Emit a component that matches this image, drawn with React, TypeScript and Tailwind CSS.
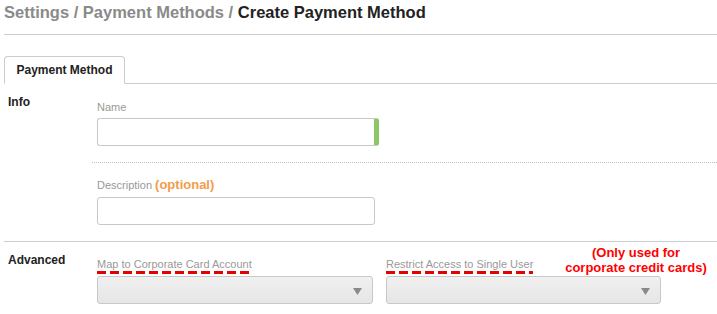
import React from "react";

const dash =
  "h-[3px] w-full bg-[repeating-linear-gradient(90deg,#e60000_0px,#e60000_9px,transparent_9px,transparent_13px)]";

const Arrow = () => (
  <svg width="9" height="7" viewBox="0 0 9 7" className="absolute right-[10px] top-[11px]">
    <path d="M0 0 H9 L4.5 7 Z" fill="#8a8a8a" />
  </svg>
);

const Select = ({ width }: { width: string }) => (
  <div
    className={`relative h-[28px] ${width} rounded-[3px] border border-[#c8c8c8] bg-gradient-to-b from-[#f0f0f0] to-[#e6e6e6]`}
  >
    <Arrow />
  </div>
);

export default function App() {
  return (
    <div className="min-h-screen bg-white pl-1 font-['Liberation_Sans',Arial,sans-serif]">
      <h1 className="h-[35px] border-b border-[#cccccc] text-[16.5px] font-bold leading-[24px]">
        <span className="text-[#8a8a8a]">Settings / Payment Methods / </span>
        <span className="text-[#222]">Create Payment Method</span>
      </h1>

      {/* tabs */}
      <div className="mt-[21px] flex h-[28px] border-b border-[#cccccc]">
        <div className="-mb-px h-[28px] w-[121px] rounded-t-[4px] border border-[#cccccc] border-b-white bg-white text-center text-[12px] font-bold leading-[26px] text-[#222]">
          Payment Method
        </div>
      </div>

      {/* Info */}
      <div className="flex border-b border-[#cccccc]">
        <div className="w-[88px] pl-1 pt-[10px] text-[12px] font-bold leading-[16px] text-[#222]">
          Info
        </div>
        <div className="flex-1">
          <div className="border-b border-dotted border-[#c4c4c4] pb-[16px] pl-[5px] pt-[16px]">
            <div className="mb-[4px] text-[11px] leading-[14px] text-[#999]">Name</div>
            <div className="h-[28px] w-[282px] rounded-[3px] border border-r-[5px] border-[#c8c8c8] border-r-[#8cc665] bg-white" />
          </div>
          <div className="pb-[16px] pl-[5px] pt-[15px]">
            <div className="mb-[5px] h-[14px] text-[11px] leading-[14px] text-[#999]">
              Description{" "}
              <span className="text-[13px] font-bold text-[#f39c4b]">(optional)</span>
            </div>
            <div className="h-[28px] w-[278px] rounded-[3px] border border-[#c8c8c8] bg-white" />
          </div>
        </div>
      </div>

      {/* Advanced */}
      <div className="relative flex pb-[10px]">
        <div className="w-[88px] pl-1 pt-[10px] text-[12px] font-bold leading-[16px] text-[#222]">
          Advanced
        </div>
        <div className="flex gap-[13px] pl-[5px] pt-[15px]">
          <div>
            <div className="mb-[2px] flex w-fit flex-col">
              <span className="text-[11px] leading-[14px] text-[#999]">Map to Corporate Card Account</span>
              <div className={dash} />
            </div>
            <Select width="w-[276px]" />
          </div>
          <div>
            <div className="mb-[2px] flex w-fit flex-col">
              <span className="text-[11px] leading-[14px] text-[#999]">Restrict Access to Single User</span>
              <div className={dash} />
            </div>
            <Select width="w-[275px]" />
          </div>
        </div>
        <div className="absolute left-[552px] top-[3px] w-[160px] text-center text-[13px] font-bold leading-[15px] text-[#ff0000]">
          (Only used for
          <br />
          corporate credit cards)
        </div>
      </div>
    </div>
  );
}
